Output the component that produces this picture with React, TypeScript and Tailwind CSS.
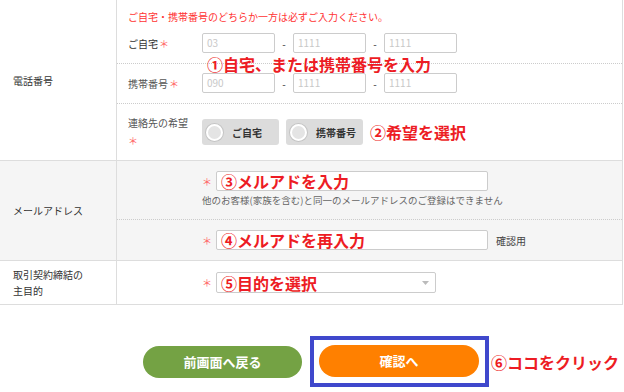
import type { ReactNode } from 'react';

const Field = ({ className, children }: { className: string; children?: ReactNode }) => (
  <div
    className={`h-[20px] border border-[#ccc] rounded-[2px] bg-white px-[4px] text-[10px] leading-[18px] text-[#c8c8c8] ${className}`}
  >
    {children}
  </div>
);

const Dash = () => <span className="w-[18px] text-center text-[10px] text-[#333]">-</span>;

const Star = () => <span className="text-[#f66] text-[10px] ml-[1px]">＊</span>;

const Radio = ({ label }: { label: string }) => (
  <div className="w-[77px] h-[26px] rounded-[3px] bg-[#dcdcdc] flex items-center pl-[4px]">
    <span className="w-[17px] h-[17px] rounded-full bg-[#e4e4e4] border-2 border-white shadow-[0_0_0_1px_#c4c4c4]" />
    <span className="ml-[9px] text-[10px] font-bold text-[#333]">{label}</span>
  </div>
);

const Note = ({ children, className = '' }: { children: ReactNode; className?: string }) => (
  <span className={`text-[16px] leading-[18px] font-bold text-[#ed1c24] ${className}`}>{children}</span>
);

const App = () => {
  return (
    <div className="w-[624px] h-[392px] bg-white text-[#333] font-['Noto_Sans_CJK_JP','Noto_Sans',sans-serif] overflow-hidden">
      <div className="w-[623px] border-r border-[#ddd]">
        {/* 電話番号 */}
        <div className="flex border-b border-[#ddd]">
          <div className="w-[117px] shrink-0 border-r border-[#ddd] flex items-center pl-[13px] text-[10px]">
            電話番号
          </div>
          <div className="flex-1 relative">
            <div className="h-[64px] border-b border-dotted border-[#ccc] pl-[11px] pt-[10px]">
              <p className="text-[10px] leading-[14px] text-[#f33]">
                ご自宅・携帯番号のどちらか一方は必ずご入力ください。
              </p>
              <div className="flex items-center mt-[9px]">
                <span className="w-[74px] text-[10px]">
                  ご自宅<Star />
                </span>
                <Field className="w-[73px]">03</Field>
                <Dash />
                <Field className="w-[73px]">1111</Field>
                <Dash />
                <Field className="w-[73px]">1111</Field>
              </div>
            </div>
            <div className="h-[40px] border-b border-dotted border-[#ccc] pl-[11px] pt-[9px]">
              <div className="flex items-center">
                <span className="w-[74px] text-[10px] text-[#555]">
                  携帯番号<Star />
                </span>
                <Field className="w-[73px]">090</Field>
                <Dash />
                <Field className="w-[73px]">1111</Field>
                <Dash />
                <Field className="w-[73px]">1111</Field>
              </div>
            </div>
            <div className="h-[56px] pl-[11px] flex items-center">
              <div className="w-[74px] text-[10px] leading-[18px] text-[#555]">
                連絡先の希望
                <br />
                <span className="text-[#f66]">＊</span>
              </div>
              <div className="flex items-center gap-[7px]">
                <Radio label="ご自宅" />
                <Radio label="携帯番号" />
                <Note>②希望を選択</Note>
              </div>
            </div>
            <Note className="absolute left-[90px] top-[55px]">①自宅、または携帯番号を入力</Note>
          </div>
        </div>

        {/* メールアドレス */}
        <div className="flex border-b border-[#ddd] bg-[#f5f5f5]">
          <div className="w-[117px] shrink-0 border-r border-[#ddd] flex items-center pl-[13px] text-[10px]">
            メールアドレス
          </div>
          <div className="flex-1">
            <div className="h-[59px] border-b border-dotted border-[#ccc] pl-[85px] pt-[10px]">
              <div className="flex items-center">
                <span className="w-[14px] text-[10px] text-[#f66]">＊</span>
                <Field className="w-[272px] h-[20px] flex items-center">
                  <Note>③メルアドを入力</Note>
                </Field>
              </div>
              <p className="mt-[2px] text-[9.5px] leading-[14px] text-[#666]">
                他のお客様(家族を含む)と同一のメールアドレスのご登録はできません
              </p>
            </div>
            <div className="h-[40px] pl-[85px] pt-[10px]">
              <div className="flex items-center">
                <span className="w-[14px] text-[10px] text-[#f66]">＊</span>
                <Field className="w-[272px] flex items-center">
                  <Note>④メルアドを再入力</Note>
                </Field>
                <span className="ml-[8px] text-[10px] text-[#444]">確認用</span>
              </div>
            </div>
          </div>
        </div>

        {/* 取引契約締結の主目的 */}
        <div className="flex border-b border-[#ddd]">
          <div className="w-[117px] shrink-0 border-r border-[#ddd] flex items-center pl-[13px] text-[10px] leading-[16px]">
            取引契約締結の
            <br />
            主目的
          </div>
          <div className="flex-1 h-[43px] pl-[85px] flex items-center">
            <span className="w-[14px] text-[10px] text-[#f66]">＊</span>
            <div className="w-[220px] h-[21px] border border-[#ccc] rounded-[2px] bg-white pl-[4px] pr-[6px] flex items-center justify-between">
              <Note>⑤目的を選択</Note>
              <svg width="7" height="4" viewBox="0 0 7 4">
                <path d="M0 0h7L3.5 4z" fill="#bbb" />
              </svg>
            </div>
          </div>
        </div>
      </div>

      {/* buttons */}
      <div className="flex items-center pt-[31px] pl-[143px]">
        <button className="w-[159px] h-[32px] rounded-full bg-[#74a244] text-white text-[13px] font-bold">
          前画面へ戻る
        </button>
        <div className="ml-[8px] w-[179px] h-[51px] border-4 border-[#3f48cc] pt-[5px] pl-[5px]">
          <button className="w-[160px] h-[32px] rounded-full bg-[#ff8000] text-white text-[13px] font-bold">
            確認へ
          </button>
        </div>
        <Note className="ml-[2px]">⑥ココをクリック</Note>
      </div>
    </div>
  );
};

export default App;
